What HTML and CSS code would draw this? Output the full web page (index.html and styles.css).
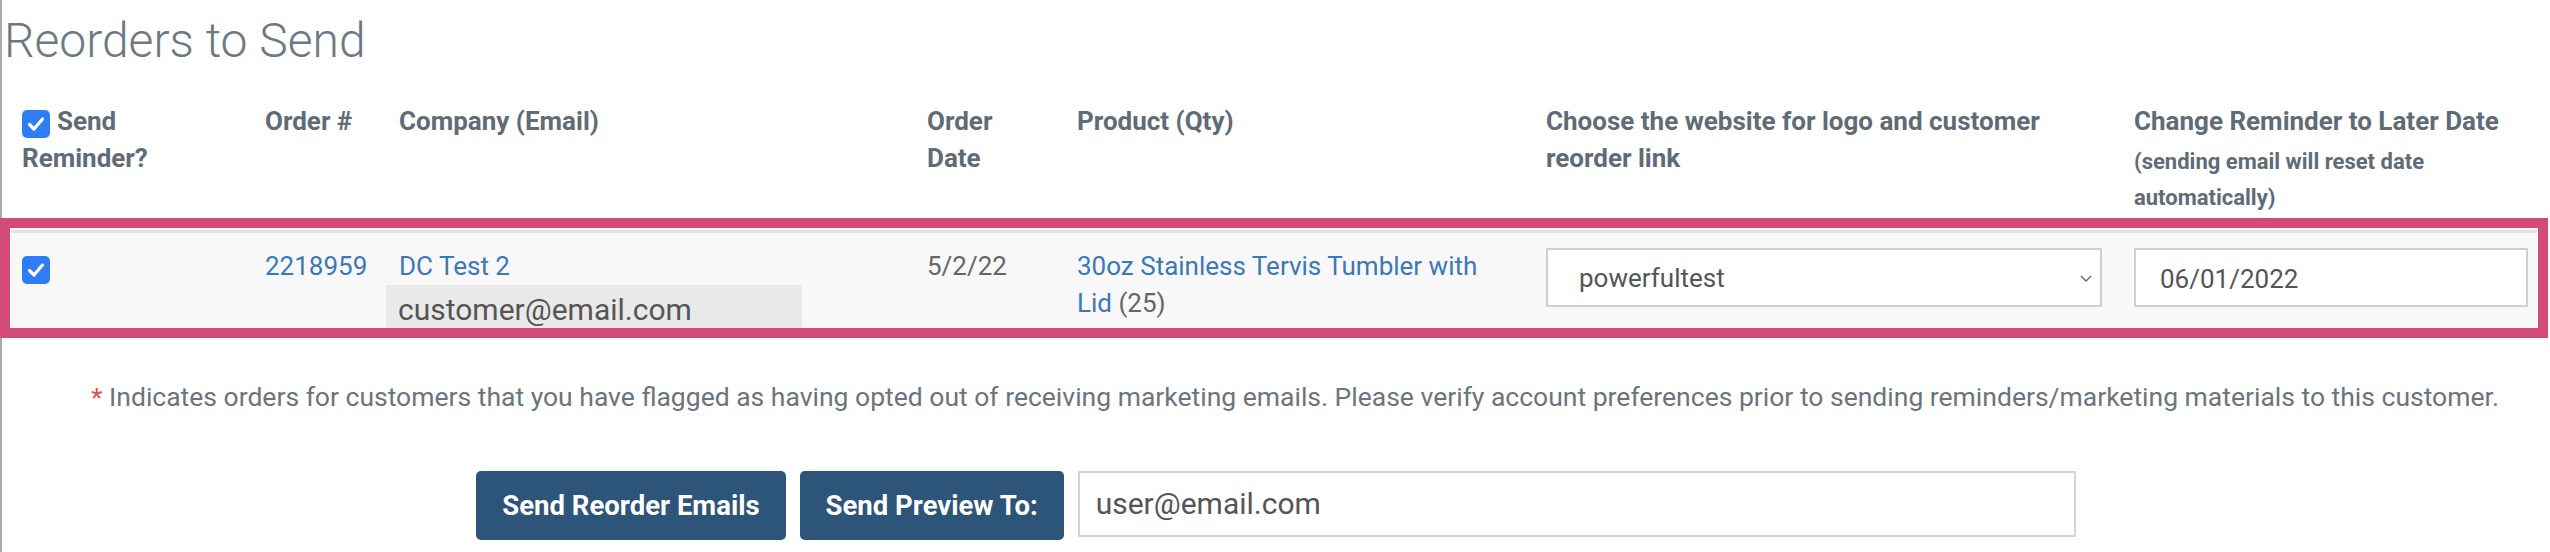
FILE: index.html
```html
<!DOCTYPE html>
<html lang="en">
<head>
  <meta charset="UTF-8">
  <meta name="viewport" content="width=device-width, initial-scale=1.0">
  <title>Reorders to Send</title>
  <link rel="stylesheet" href="styles.css">
</head>
<body>
  <div class="page">
    <h1 class="title">Reorders to Send</h1>

    <table class="reorders">
      <colgroup>
        <col class="col-check">
        <col class="col-order">
        <col class="col-company">
        <col class="col-date">
        <col class="col-product">
        <col class="col-site">
        <col class="col-remind">
      </colgroup>
      <thead>
        <tr>
          <th><span class="check check-head"><svg width="28" height="28" viewBox="0 0 28 28"><path d="M7.5 14.5l4.5 4.5 8.5-10" fill="none" stroke="#fff" stroke-width="3.2" stroke-linecap="round" stroke-linejoin="round"/></svg></span>Send<br>Reminder?</th>
          <th>Order #</th>
          <th>Company (Email)</th>
          <th>Order<br>Date</th>
          <th>Product (Qty)</th>
          <th>Choose the website for logo and customer reorder link</th>
          <th>Change Reminder to Later Date<small>(sending email will reset date automatically)</small></th>
        </tr>
      </thead>
      <tbody>
        <!-- one reorder row -->
        <tr>
          <td><span class="check check-row"><svg width="28" height="28" viewBox="0 0 28 28"><path d="M7.5 14.5l4.5 4.5 8.5-10" fill="none" stroke="#fff" stroke-width="3.2" stroke-linecap="round" stroke-linejoin="round"/></svg></span></td>
          <td><a href="#">2218959</a></td>
          <td>
            <a href="#">DC Test 2</a>
            <div class="email-box">customer@email.com</div>
          </td>
          <td>5/2/22</td>
          <td class="product"><a href="#">30oz Stainless Tervis Tumbler with Lid</a> (25)</td>
          <td>
            <div class="select-box">
              <span>powerfultest</span>
              <svg width="12" height="7" viewBox="0 0 12 7"><path d="M1 1l5 5 5-5" fill="none" stroke="#666" stroke-width="1.4"/></svg>
            </div>
          </td>
          <td class="last"><div class="date-box">06/01/2022</div></td>
        </tr>
      </tbody>
    </table>

    <!-- highlight drawn over the row -->
    <div class="highlight"></div>

    <p class="note"><span class="req">*</span> Indicates orders for customers that you have flagged as having opted out of receiving marketing emails. Please verify account preferences prior to sending reminders/marketing materials to this customer.</p>

    <div class="actions">
      <button class="btn">Send Reorder Emails</button>
      <button class="btn">Send Preview To:</button>
      <input class="preview-input" type="text" value="user@email.com">
    </div>
  </div>
</body>
</html>
```

FILE: styles.css
```css
body {
  margin: 0;
  font-family: Roboto, "Liberation Sans", sans-serif;
  background-color: #fff;
  color: #666;
}

.page {
  position: relative;
  min-height: 552px;
  box-sizing: border-box;
  border-left: 2px solid #ababab;
}

.title {
  margin: 0;
  padding: 15px 0 0 2px;
  font-size: 48px;
  font-weight: 300;
  line-height: 1.1;
  color: #6e7883;
}

/* Table */
.reorders {
  table-layout: fixed;
  width: 2526px;
  border-collapse: separate;
  border-spacing: 0;
  margin: 24px 0 0 9px;
}

.col-check { width: 243px; }
.col-order { width: 134px; }
.col-company { width: 528px; }
.col-date { width: 150px; }
.col-product { width: 469px; }
.col-site { width: 588px; }
.col-remind { width: 414px; }

th {
  padding: 11px 11px 14px;
  text-align: left;
  vertical-align: top;
  font-size: 26px;
  font-weight: 700;
  line-height: 37px;
  color: #5f6b77;
}

th small {
  display: block;
  margin-top: 4px;
  font-size: 22px;
  line-height: 36px;
}

td {
  padding: 15px 11px 1px;
  vertical-align: top;
  font-size: 26px;
  line-height: 37px;
  background-color: #f8f8f8;
  border-top: 3px solid #e2e2e2;
  color: #666;
}

td.product { padding-right: 30px; }
td.last { padding-right: 9px; }

a {
  color: #3a78b9;
  text-decoration: none;
}

.check {
  display: inline-block;
  width: 28px;
  height: 28px;
  border-radius: 5px;
  background-color: #2f7df6;
}

.check svg { display: block; }

.check-head {
  vertical-align: -8px;
  margin-right: 7px;
}

.check-row {
  display: block;
  margin-top: 8px;
}

.email-box {
  width: 416px;
  height: 52px;
  margin-left: -13px;
  padding: 0 12px;
  box-sizing: border-box;
  background-color: #e9e9e9;
  font-size: 30px;
  line-height: 50px;
  color: #555;
}

.select-box {
  display: flex;
  align-items: center;
  justify-content: space-between;
  width: 556px;
  height: 59px;
  box-sizing: border-box;
  padding: 2px 8px 0 31px;
  border: 2px solid #d0d0d0;
  background-color: #fff;
  font-size: 26px;
  color: #555;
}

.date-box {
  width: 394px;
  height: 59px;
  box-sizing: border-box;
  padding: 3px 24px 0;
  border: 2px solid #d0d0d0;
  background-color: #fff;
  font-size: 26px;
  line-height: 52px;
  color: #555;
}

.highlight {
  position: absolute;
  top: 218px;
  left: -2px;
  width: 2548px;
  height: 120px;
  box-sizing: border-box;
  border: 10px solid #d34b78;
  pointer-events: none;
}

.note {
  margin: 42px 0 0;
  padding-left: 38px;
  text-align: center;
  font-size: 26.5px;
  line-height: 34px;
  color: #6b747d;
}

.req { color: #d9534f; }

.actions {
  display: flex;
  justify-content: center;
  align-items: flex-start;
  gap: 14px;
  margin-top: 57px;
}

.btn {
  height: 69px;
  padding: 0 26px;
  border: none;
  border-radius: 5px;
  background-color: #2d5479;
  color: white;
  font-family: inherit;
  font-size: 27.5px;
  font-weight: 700;
}

.preview-input {
  width: 998px;
  height: 66px;
  box-sizing: border-box;
  padding: 0 16px;
  border: 2px solid #d3d3d3;
  font-family: inherit;
  font-size: 30px;
  color: #555;
}
```
